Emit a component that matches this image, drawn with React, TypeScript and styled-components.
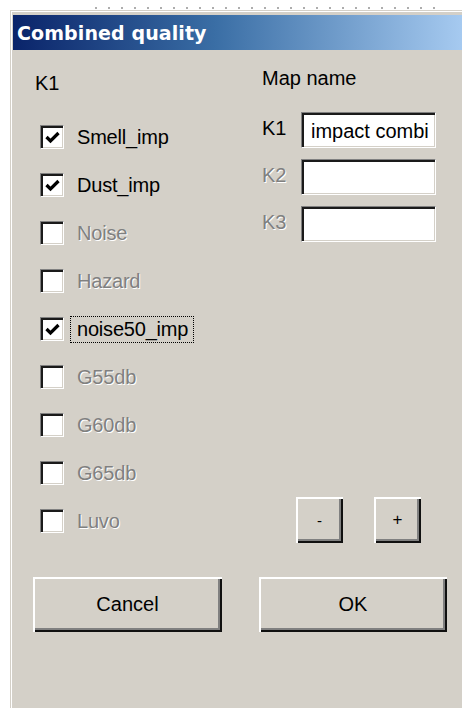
import React from "react";
import styled, { createGlobalStyle } from "styled-components";

const Global = createGlobalStyle`
  html, body {
    margin: 0;
    padding: 0;
    background: #ffffff;
    overflow: hidden;
  }
  body {
    font-family: "Liberation Sans", Arial, sans-serif;
  }
`;

const Desk = styled.div`
  width: 462px;
  height: 708px;
  overflow: hidden;
  display: flex;
  flex-direction: column;
  background: #ffffff;
`;

/* a sliver of the window lying behind the dialog */
const BackStrip = styled.div`
  height: 10px;
  flex: none;
  display: flex;
  align-items: flex-end;
  padding-left: 95px;
  box-sizing: border-box;
`;

const Ticks = styled.div`
  width: 345px;
  height: 2px;
  margin-bottom: 1px;
  background: repeating-linear-gradient(
    to right,
    #6a6a6a 0 2px,
    transparent 2px 13px
  );
  opacity: 0.55;
`;

const Window = styled.div`
  flex: 1;
  margin-left: 10px;
  display: flex;
  flex-direction: column;
  background: #d4d0c8;
  border-left: 1px solid #d4d0c8;
  border-top: 1px solid #d4d0c8;
  box-shadow: inset 1px 1px 0 #ffffff;
  padding: 4px 0 0 2px;
`;

const TitleBar = styled.div`
  height: 35px;
  flex: none;
  display: flex;
  align-items: center;
  padding-left: 4px;
  background: linear-gradient(to right, #0a246a 0%, #3a6ea5 45%, #a6caf0 100%);
  color: #ffffff;
  font-family: "DejaVu Sans", Verdana, sans-serif;
  font-weight: bold;
  font-size: 19px;
  letter-spacing: 0.1px;
  white-space: nowrap;
`;

const Content = styled.div`
  display: grid;
  grid-template-columns: 249px 1fr;
  color: #000000;
  font-size: 20px;
`;

const LeftColumn = styled.div`
  display: flex;
  flex-direction: column;
  padding-left: 22px;
`;

const ColumnHeader = styled.div<{ $pad: number }>`
  padding-top: ${(p) => p.$pad}px;
  height: 22px;
  line-height: 22px;
  white-space: nowrap;
`;

const LeftHeader = styled(ColumnHeader)`
  padding-bottom: 19px;
`;

const CheckRow = styled.div`
  height: 48px;
  display: flex;
  align-items: center;
  padding-left: 5px;
`;

const Box = styled.span`
  width: 24px;
  height: 24px;
  flex: none;
  box-sizing: border-box;
  background: #ffffff;
  border-style: solid;
  border-width: 1px;
  border-color: #808080 #ffffff #ffffff #808080;
  box-shadow: inset 2px 2px 0 #1a1a1a, inset -1px -1px 0 #d4d0c8;
  display: flex;
  align-items: center;
  justify-content: center;
`;

const Label = styled.span<{ $disabled?: boolean; $focused?: boolean }>`
  margin-left: 6px;
  padding: 1px 5px 2px 6px;
  line-height: 22px;
  border: 1px dotted ${(p) => (p.$focused ? "#000000" : "transparent")};
  color: ${(p) => (p.$disabled ? "#808080" : "#000000")};
  text-shadow: ${(p) => (p.$disabled ? "1px 1px 0 #ffffff" : "none")};
  white-space: nowrap;
  letter-spacing: -0.2px;
`;

const RightColumn = styled.div`
  display: flex;
  flex-direction: column;
`;

const FieldList = styled.div`
  display: flex;
  flex-direction: column;
  gap: 11px;
  margin-top: 23px;
`;

const FieldRow = styled.div`
  display: flex;
  align-items: center;
`;

const FieldLabel = styled.span<{ $disabled?: boolean }>`
  width: 39px;
  flex: none;
  margin-top: -4px;
  color: ${(p) => (p.$disabled ? "#808080" : "#000000")};
  text-shadow: ${(p) => (p.$disabled ? "1px 1px 0 #ffffff" : "none")};
`;

const TextBox = styled.div`
  width: 135px;
  height: 36px;
  box-sizing: border-box;
  background: #ffffff;
  border-style: solid;
  border-width: 1px;
  border-color: #808080 #ffffff #ffffff #808080;
  box-shadow: inset 2px 2px 0 #1a1a1a, inset -1px -1px 0 #d4d0c8;
  padding: 2px 0 0 9px;
  display: flex;
  align-items: center;
  overflow: hidden;
  white-space: nowrap;
  font-size: 20px;
`;

const Stepper = styled.div`
  margin-top: auto;
  margin-bottom: 2px;
  margin-left: 34px;
  display: flex;
  gap: 31px;
`;

const Bevel = styled.button<{ $w: number; $h: number; $size: number }>`
  width: ${(p) => p.$w}px;
  height: ${(p) => p.$h}px;
  padding: 0;
  border: none;
  background: #d4d0c8;
  color: #000000;
  font-family: "Liberation Sans", Arial, sans-serif;
  font-size: ${(p) => p.$size}px;
  box-shadow: inset 2px 2px 0 #ffffff, inset -2px -2px 0 #101010,
    inset -4px -4px 0 #808080;
  display: flex;
  align-items: center;
  justify-content: center;
  cursor: default;
`;

const ButtonRow = styled.div`
  display: flex;
  gap: 37px;
  padding-left: 20px;
  margin-top: 32px;
`;

const Check = () => (
  <svg width="15" height="13" viewBox="0 0 15 13">
    <polyline
      points="1.5,6 5.5,10 13.5,2"
      fill="none"
      stroke="#000000"
      strokeWidth="3.2"
    />
  </svg>
);

type Layer = { name: string; checked?: boolean; disabled?: boolean; focused?: boolean };

const layers: Layer[] = [
  { name: "Smell_imp", checked: true },
  { name: "Dust_imp", checked: true },
  { name: "Noise", disabled: true },
  { name: "Hazard", disabled: true },
  { name: "noise50_imp", checked: true, focused: true },
  { name: "G55db", disabled: true },
  { name: "G60db", disabled: true },
  { name: "G65db", disabled: true },
  { name: "Luvo", disabled: true },
];

const fields = [
  { key: "K1", value: "impact combi" },
  { key: "K2", value: "", disabled: true },
  { key: "K3", value: "", disabled: true },
];

export default function App() {
  return (
    <>
      <Global />
      <Desk>
        <BackStrip>
          <Ticks />
        </BackStrip>
        <Window>
          <TitleBar>Combined quality</TitleBar>
          <Content>
            <LeftColumn>
              <LeftHeader $pad={22}>K1</LeftHeader>
              {layers.map((l) => (
                <CheckRow key={l.name}>
                  <Box>{l.checked && <Check />}</Box>
                  <Label $disabled={l.disabled} $focused={l.focused}>
                    {l.name}
                  </Label>
                </CheckRow>
              ))}
            </LeftColumn>
            <RightColumn>
              <ColumnHeader $pad={17}>Map name</ColumnHeader>
              <FieldList>
                {fields.map((f) => (
                  <FieldRow key={f.key}>
                    <FieldLabel $disabled={f.disabled}>{f.key}</FieldLabel>
                    <TextBox>{f.value}</TextBox>
                  </FieldRow>
                ))}
              </FieldList>
              <Stepper>
                <Bevel $w={47} $h={46} $size={15}>-</Bevel>
                <Bevel $w={47} $h={46} $size={17}>+</Bevel>
              </Stepper>
            </RightColumn>
          </Content>
          <ButtonRow>
            <Bevel $w={189} $h={55} $size={20}>Cancel</Bevel>
            <Bevel $w={188} $h={55} $size={20}>OK</Bevel>
          </ButtonRow>
        </Window>
      </Desk>
    </>
  );
}
